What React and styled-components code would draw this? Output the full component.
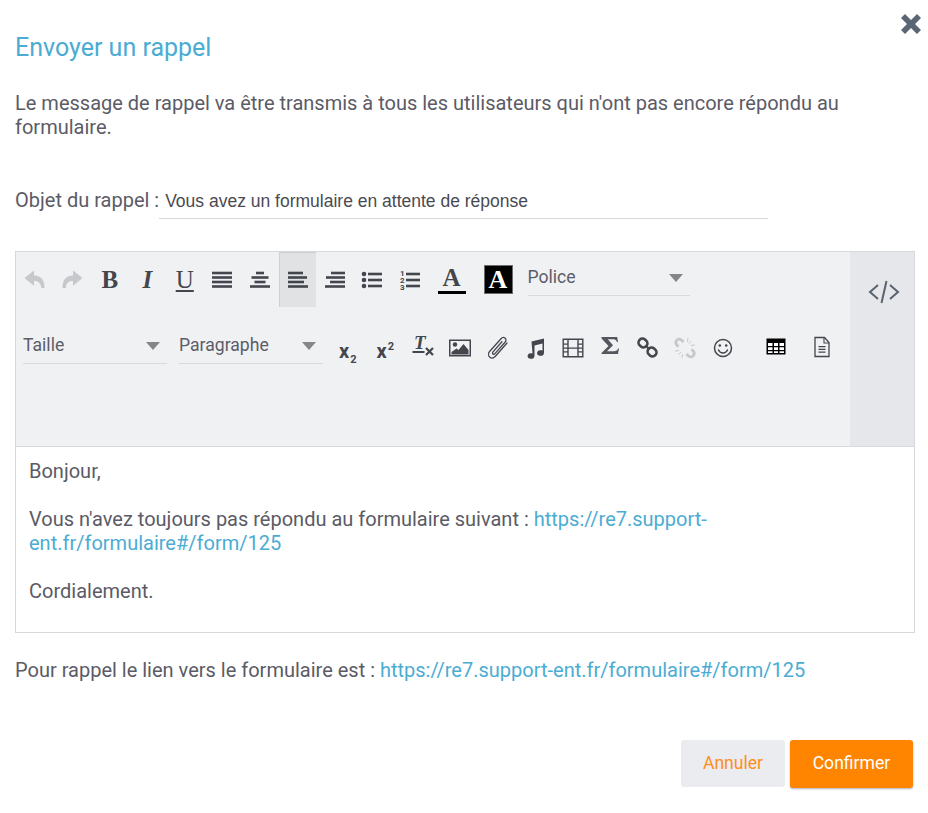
import React from 'react';
import styled, { createGlobalStyle } from 'styled-components';

const GlobalStyle = createGlobalStyle`
  body {
    margin: 0;
    background: #fff;
    font-family: Roboto, sans-serif;
    color: #5b5b66;
  }
`;

const Page = styled.div`
  position: relative;
  width: 928px;
  height: 813px;
  padding: 32px 13px 0 15px;
  box-sizing: border-box;
  overflow: hidden;
`;

const CloseButton = styled.button`
  position: absolute;
  top: 13px;
  right: 6px;
  width: 22px;
  height: 22px;
  padding: 0;
  border: none;
  background: none;
  color: #5a6675;
`;

const Title = styled.h2`
  margin: 0;
  height: 32px;
  font-size: 25px;
  line-height: 32px;
  font-weight: 400;
  color: #4bacd3;
`;

const Intro = styled.p`
  margin: 27px 0 0;
  font-size: 20px;
  line-height: 24px;
`;

const SubjectRow = styled.div`
  display: flex;
  align-items: flex-start;
  margin-top: 49px;
`;

const SubjectLabel = styled.label`
  font-size: 20px;
  line-height: 24px;
`;

const SubjectInput = styled.div`
  width: 609px;
  height: 31px;
  padding: 0 0 0 6px;
  box-sizing: border-box;
  border-bottom: 1px solid #d8d8dc;
  font-family: 'Liberation Sans', Arial, sans-serif;
  font-size: 17.5px;
  line-height: 26px;
  color: #4a4a52;
`;

const Editor = styled.div`
  margin-top: 32px;
  width: 900px;
  border: 1px solid #d8d8dc;
  box-sizing: border-box;
`;

const ToolbarArea = styled.div`
  display: flex;
  height: 195px;
  background: #f0f1f3;
  border-bottom: 1px solid #d8d8dc;
  box-sizing: border-box;
`;

const Tools = styled.div`
  flex: 1;
  display: flex;
  flex-direction: column;
`;

const ToolRow = styled.div`
  display: flex;
  align-items: flex-start;
  height: ${(p) => p.$height}px;
  padding-left: ${(p) => p.$inset}px;
`;

const ToolButton = styled.div`
  flex: none;
  display: flex;
  align-items: center;
  justify-content: center;
  width: ${(p) => p.$width || 37.5}px;
  height: ${(p) => p.$tall || 55}px;
  margin-left: ${(p) => p.$gap || 0}px;
  padding-bottom: ${(p) => p.$lift || 0}px;
  box-sizing: border-box;
  color: ${(p) => (p.$disabled ? '#c6c8cc' : '#44464e')};
  background: ${(p) => (p.$active ? '#e1e2e4' : 'transparent')};
  border-left: ${(p) => (p.$active ? '1px solid #cfd0d3' : 'none')};
  border-top: ${(p) => (p.$active ? '1px solid #cfd0d3' : 'none')};
`;

const Glyph = styled.span`
  font-family: 'Liberation Serif', 'Times New Roman', serif;
  font-size: 25px;
  line-height: 24px;
  font-weight: ${(p) => (p.$bold ? 700 : 400)};
  font-style: ${(p) => (p.$italic ? 'italic' : 'normal')};
  text-decoration: ${(p) => (p.$underline ? 'underline' : 'none')};
  text-decoration-thickness: 2px;
  text-underline-offset: 2px;
`;

const ColorLetter = styled.span`
  display: block;
  width: 28px;
  height: 28px;
  font-family: 'Liberation Serif', 'Times New Roman', serif;
  font-weight: 700;
  font-size: 25px;
  line-height: 24px;
  text-align: center;
  box-sizing: border-box;
  border-bottom: 3px solid #000;
  color: #44464e;
`;

const ColorBox = styled.span`
  display: block;
  width: 29px;
  height: 29px;
  margin: -1px 0 0 1px;
  background: #000;
  border: 1px solid #6c6c6c;
  box-sizing: border-box;
  font-family: 'Liberation Serif', 'Times New Roman', serif;
  font-weight: 700;
  font-size: 26px;
  line-height: 28px;
  text-align: center;
  color: #fff;
`;

const Script = styled.span`
  font-family: Roboto, sans-serif;
  font-size: 20px;
  font-weight: 700;
  color: #44464e;
  line-height: 20px;
  position: relative;
  top: 3px;
  sub, sup {
    font-size: 11px;
    line-height: 0;
    margin-left: 1px;
  }
`;

const Select = styled.div`
  flex: none;
  display: flex;
  justify-content: space-between;
  width: ${(p) => p.$width}px;
  height: ${(p) => p.$height}px;
  margin: ${(p) => p.$margin};
  padding-right: 7px;
  box-sizing: border-box;
  border-bottom: 1px solid #dadadd;
  font-size: 17.6px;
  line-height: 24px;
  color: #5b5d68;
`;

const Caret = styled.span`
  margin-top: 9px;
  width: 0;
  height: 0;
  border-left: 7px solid transparent;
  border-right: 7px solid transparent;
  border-top: 8px solid #85858a;
`;

const SourcePanel = styled.div`
  flex: none;
  display: flex;
  justify-content: center;
  width: 64px;
  padding: 27px 0 0 3px;
  box-sizing: border-box;
  background: #e6e7ea;
  color: #5a6270;
`;

const Body = styled.div`
  height: 185px;
  padding: 12px 13px;
  box-sizing: border-box;
  font-size: 20px;
  line-height: 24px;
`;

const Line = styled.div`
  margin-bottom: ${(p) => p.$after || 0}px;
`;

const Link = styled.a`
  color: #4bacd3;
  text-decoration: none;
`;

const Recall = styled.p`
  margin: 25px 0 0;
  font-size: 20px;
  line-height: 24px;
`;

const Actions = styled.div`
  display: flex;
  justify-content: flex-end;
  gap: 5px;
  margin-top: 58px;
  padding-right: 2px;
`;

const ActionButton = styled.button`
  height: ${(p) => (p.$primary ? 48 : 47)}px;
  width: ${(p) => (p.$primary ? 123 : 104)}px;
  padding: 0 0 2px;
  border: none;
  border-radius: 3px;
  font-family: Roboto, sans-serif;
  font-size: 17.6px;
  background: ${(p) => (p.$primary ? '#ff8500' : '#ebecf0')};
  color: ${(p) => (p.$primary ? '#fff' : '#ff8d1a')};
  box-shadow: ${(p) => (p.$primary ? '0 1px 2px rgba(80, 80, 100, 0.45)' : 'none')};
`;

const IconSvg = styled.svg`
  overflow: visible;
`;

const Svg = ({ size = 24, children }) => (
  <IconSvg width={size} height={size} viewBox="0 0 24 24" fill="currentColor" aria-hidden="true">
    {children}
  </IconSvg>
);

const barRows = [3.7, 8.2, 12.7, 17.2];

const Bars = ({ lines }) => (
  <Svg>
    {lines.map(([x, w], i) => (
      <rect key={i} x={x} y={barRows[i]} width={w} height="2.6" />
    ))}
  </Svg>
);

const UndoIcon = ({ flip }) => (
  <Svg>
    <g transform={flip ? 'translate(24 0) scale(-1 1)' : undefined}>
      <path d="M11 2.500v5c6.500.2 10.500 3.500 10.500 12.500h-3.200c-.6-5.300-3-7-7.300-7.200v5L1.500 10z" />
    </g>
  </Svg>
);

const ClearFormat = () => (
  <Svg>
    <text x="3" y="14" fontFamily="Liberation Serif, serif" fontStyle="italic" fontWeight="700" fontSize="19">T</text>
    <rect x="1.500" y="16" width="12" height="2" />
    <path d="M15 13l7 7m0-7l-7 7" fill="none" stroke="currentColor" strokeWidth="2.200" />
  </Svg>
);

const ImageIcon = () => (
  <Svg>
    <path d="M1 3.500h22v17H1zm1.500 1.500v14h19V5z" />
    <circle cx="7" cy="8.500" r="2.200" />
    <path d="M3.500 18.500v-2.500l5-3.500 2 1.500 5-6 5 6v4.500z" />
  </Svg>
);

const ClipIcon = () => (
  <Svg>
    <path
      d="M21 7 9.400 20.300c-1.700 1.800-4.200 2.100-5.800.7-1.500-1.400-1.400-3.900.2-5.700L15 2.700c1.200-1.300 3-1.500 4.200-.5 1.100 1 1 2.800-.2 4.100L8.900 17.600c-.6.700-1.400.8-2 .3-.6-.5-.5-1.400.1-2.100l8.900-10"
      fill="none"
      stroke="currentColor"
      strokeWidth="1.300"
      strokeLinecap="round"
    />
  </Svg>
);

const MusicIcon = () => (
  <Svg>
    <path d="M8.500 5.500 21 2.500V17h-.1a3.400 2.800 0 1 1-2.600-2.700c.5 0 .9.100 1.200.2V7.500l-8 2V20h-.1a3.400 2.800 0 1 1-2.600-2.700c.4 0 .5 0 .7.100z" />
  </Svg>
);

const FilmIcon = () => (
  <Svg>
    <path d="M1.500 2.500h21v19h-21zm1.400 1.400v16.200h18.200V3.900z" />
    <path d="M6.300 3h1.400v18H6.300zm10 0h1.400v18h-1.400zM2 7.500h5v1.300H2zm0 3.900h20v1.300H2zM2 15.300h5v1.300H2zm15-7.800h5v1.300h-5zm0 7.800h5v1.300h-5z" />
  </Svg>
);

const SigmaIcon = () => (
  <Svg>
    <path
      fill="#55575e"
      d="M3.500 3h15.700l.8 5h-1.100c-.5-1.800-1.500-2.700-3.500-2.700H9.800l5.200 6-6 5.900h7c2 0 3.500-1 4-2.700h1l-1 5.500H3.500V19l7-7-7-7.500z"
    />
  </Svg>
);

const LinkIcon = () => (
  <Svg size={21}>
    <g fill="none" stroke="currentColor" strokeWidth="3">
      <rect x="1.500" y="2.500" width="10.500" height="9" rx="4.500" transform="rotate(40 7 7)" />
      <rect x="12" y="12.500" width="10.500" height="9" rx="4.500" transform="rotate(40 17 17)" />
      <path d="M10 10l4 4" strokeWidth="2.500" />
    </g>
  </Svg>
);

const UnlinkIcon = () => (
  <Svg>
    <g fill="none" stroke="currentColor" strokeWidth="2.800">
      <path d="M10.500 6 8.500 4C6.500 2.500 4.500 3 3.500 4.500c-1 1.500-.8 3.500.5 4.800l1.500 1.500" />
      <path d="M13.500 18l2 2c2 1.500 4 1 5-.5s.8-3.500-.5-4.800l-1.500-1.500" />
    </g>
    <g fill="none" stroke="currentColor" strokeWidth="1">
      <path d="M15 2l-.5 4M22 9l-4 .5M18.500 5l-2.500 2.500M2 15l4-.5M9 22l.5-4M5.500 18.500 8 16" />
    </g>
  </Svg>
);

const SmileIcon = () => (
  <Svg>
    <circle cx="12" cy="12" r="8.500" fill="none" stroke="currentColor" strokeWidth="1.500" />
    <circle cx="8.800" cy="9.500" r="1.300" />
    <circle cx="15.200" cy="9.500" r="1.300" />
    <path d="M7.500 14c1 2 2.500 3 4.500 3s3.500-1 4.500-3" fill="none" stroke="currentColor" strokeWidth="1.500" strokeLinecap="round" />
  </Svg>
);

const TableIcon = () => (
  <Svg>
    <path fill="#000" d="M2.500 3.500h19v16h-19z" />
    <path fill="#fff" d="M4 8h4.500v3H4zm6 0h4v3h-4zm5.500 0H20v3h-4.500zM4 12.300h4.500V15H4zm6 0h4V15h-4zm5.500 0H20V15h-4.500zM4 16.300h4.500V18H4zm6 0h4V18h-4zm5.500 0H20V18h-4.500z" />
  </Svg>
);

const FileIcon = () => (
  <Svg>
    <path d="M5 2.500h9.500l4.500 5v14H5z" fill="none" stroke="currentColor" strokeWidth="1.300" />
    <path d="M14 2.500v5.500h5" fill="none" stroke="currentColor" strokeWidth="1.100" />
    <path d="M8.500 11h7v1.200h-7zm0 2.800h7V15h-7zm0 2.800h7v1.200h-7z" />
  </Svg>
);

const ListIcon = ({ numbered }) => (
  <Svg>
    {numbered ? (
      <>
        <text x="2" y="8" fontFamily="Roboto, sans-serif" fontWeight="700" fontSize="8">1</text>
        <text x="2" y="14.500" fontFamily="Roboto, sans-serif" fontWeight="700" fontSize="8">2</text>
        <text x="2" y="21.500" fontFamily="Roboto, sans-serif" fontWeight="700" fontSize="8">3</text>
      </>
    ) : (
      <>
        <circle cx="4" cy="6" r="2.300" />
        <circle cx="4" cy="12" r="2.300" />
        <circle cx="4" cy="18" r="2.300" />
      </>
    )}
    <rect x="8" y="4.700" width="14" height="2.600" />
    <rect x="8" y="10.700" width="14" height="2.600" />
    <rect x="8" y="16.700" width="14" height="2.600" />
  </Svg>
);

const firstRowTools = [
  { key: 'undo', disabled: true, node: <UndoIcon /> },
  { key: 'redo', disabled: true, node: <UndoIcon flip /> },
  { key: 'bold', node: <Glyph $bold>B</Glyph> },
  { key: 'italic', node: <Glyph $bold $italic>I</Glyph> },
  { key: 'underline', node: <Glyph $underline>U</Glyph> },
  { key: 'justify', node: <Bars lines={[[2, 20], [2, 20], [2, 20], [2, 20]]} /> },
  { key: 'center', node: <Bars lines={[[8, 8], [3.500, 17], [6.500, 11], [2, 20]]} /> },
  { key: 'left', active: true, node: <Bars lines={[[2, 15], [2, 19], [2, 16], [2, 20]]} /> },
  { key: 'right', node: <Bars lines={[[8, 14], [3, 19], [7, 15], [2, 20]]} /> },
  { key: 'bullets', node: <ListIcon /> },
  { key: 'numbers', node: <ListIcon numbered /> },
];

const secondRowTools = [
  { key: 'sub', node: <Script>x<sub>2</sub></Script> },
  { key: 'sup', node: <Script>x<sup>2</sup></Script> },
  { key: 'clear', lift: 2, node: <ClearFormat /> },
  { key: 'image', node: <ImageIcon /> },
  { key: 'clip', node: <ClipIcon /> },
  { key: 'music', node: <MusicIcon /> },
  { key: 'film', node: <FilmIcon /> },
  { key: 'sigma', lift: 5, node: <SigmaIcon /> },
  { key: 'link', lift: 1, node: <LinkIcon /> },
  { key: 'unlink', disabled: true, node: <UnlinkIcon /> },
  { key: 'smile', node: <SmileIcon /> },
  { key: 'table', gap: 16, lift: 2, node: <TableIcon /> },
  { key: 'file', gap: 8, lift: 3, node: <FileIcon /> },
];

const App = () => (
  <>
    <GlobalStyle />
    <Page>
      <CloseButton aria-label="Fermer">
        <svg width="22" height="22" viewBox="0 0 22 22" fill="currentColor">
          <path d="M5 1l6 6 6-6 4 4-6 6 6 6-4 4-6-6-6 6-4-4 6-6-6-6z" />
        </svg>
      </CloseButton>
      <Title>Envoyer un rappel</Title>
      <Intro>
        Le message de rappel va être transmis à tous les utilisateurs qui n'ont pas encore répondu au
        formulaire.
      </Intro>
      <SubjectRow>
        <SubjectLabel>Objet du rappel :</SubjectLabel>
        <SubjectInput>Vous avez un formulaire en attente de réponse</SubjectInput>
      </SubjectRow>
      <Editor>
        <ToolbarArea>
          <Tools>
            <ToolRow $height={68} $inset={0}>
              {firstRowTools.map((tool) => (
                <ToolButton key={tool.key} $disabled={tool.disabled} $active={tool.active}>
                  {tool.node}
                </ToolButton>
              ))}
              <ToolButton $width={46}>
                <ColorLetter>A</ColorLetter>
              </ToolButton>
              <ToolButton $width={46}>
                <ColorBox>A</ColorBox>
              </ToolButton>
              <Select $width={162} $height={31} $margin="13px 0 0 7px">
                Police
                <Caret />
              </Select>
            </ToolRow>
            <ToolRow $height={56} $inset={7}>
              <Select $width={144} $height={31} $margin="13px 0 0 0">
                Taille
                <Caret />
              </Select>
              <Select $width={144} $height={31} $margin="13px 6px 0 12px">
                Paragraphe
                <Caret />
              </Select>
              {secondRowTools.map((tool) => (
                <ToolButton key={tool.key} $disabled={tool.disabled} $gap={tool.gap} $lift={tool.lift} $tall={56}>
                  {tool.node}
                </ToolButton>
              ))}
            </ToolRow>
          </Tools>
          <SourcePanel>
            <svg width="32" height="26" viewBox="0 0 32 26" fill="none" stroke="currentColor" strokeWidth="2">
              <path d="M10 6l-8 7 8 7M22 6l8 7-8 7M18.500 2l-5 22" />
            </svg>
          </SourcePanel>
        </ToolbarArea>
        <Body>
          <Line $after={24}>Bonjour,</Line>
          <Line $after={24}>
            Vous n'avez toujours pas répondu au formulaire suivant :{' '}
            <Link href="#">https://re7.support-ent.fr/formulaire#/form/125</Link>
          </Line>
          <Line>Cordialement.</Line>
        </Body>
      </Editor>
      <Recall>
        Pour rappel le lien vers le formulaire est :{' '}
        <Link href="#">https://re7.support-ent.fr/formulaire#/form/125</Link>
      </Recall>
      <Actions>
        <ActionButton>Annuler</ActionButton>
        <ActionButton $primary>Confirmer</ActionButton>
      </Actions>
    </Page>
  </>
);

export default App;
